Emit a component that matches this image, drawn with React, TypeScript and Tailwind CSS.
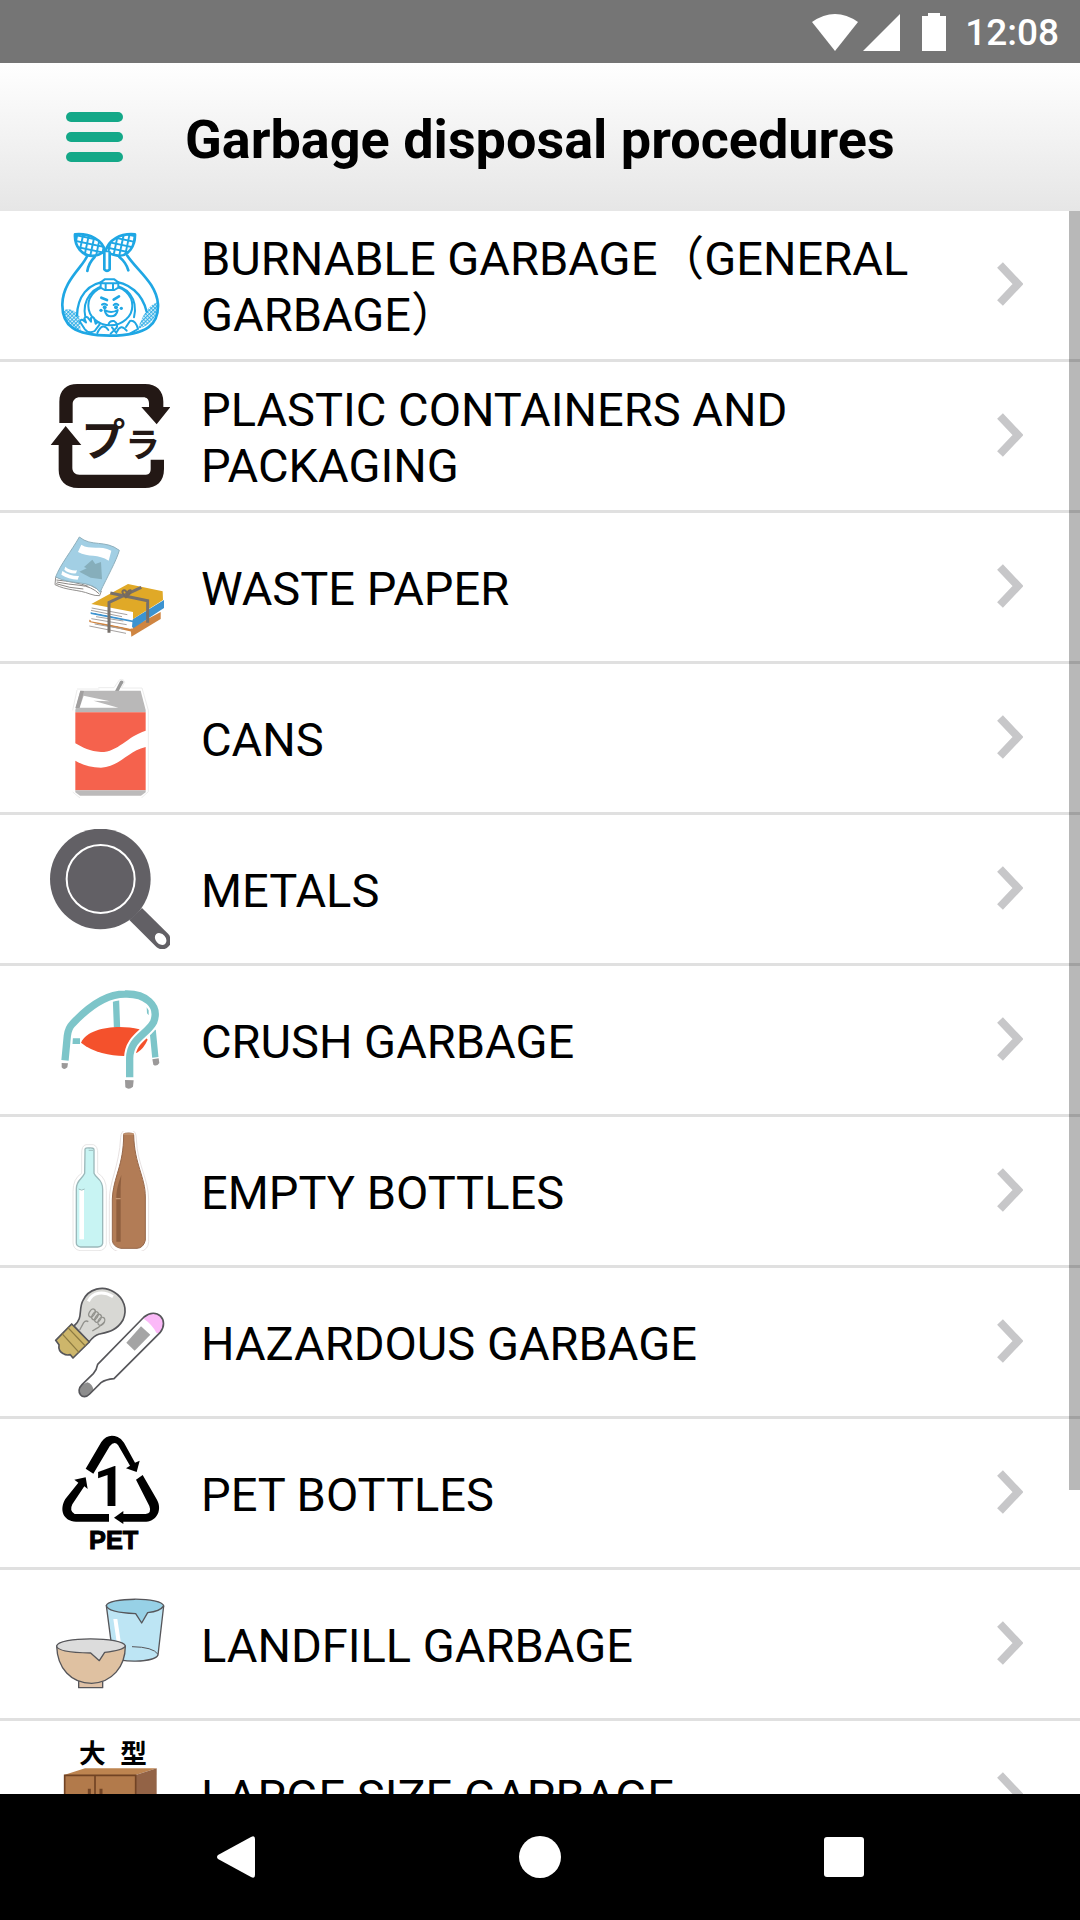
import type { ReactNode } from "react";

const BLUE = "#1fa7e4";
const OUTLINE = "#56565a";

function Icon({ viewBox, children }: { viewBox: string; children: ReactNode }) {
  return (
    <svg viewBox={viewBox} className="h-[120px] w-[120px] shrink-0" fill="none" aria-hidden="true">
      {children}
    </svg>
  );
}

function BurnableIcon() {
  return (
    <Icon viewBox="30 30 360 360">
      <defs>
        <pattern id="weave" width="17" height="17" patternUnits="userSpaceOnUse" patternTransform="rotate(12)">
          <path d="M0 3H17M3 0V17" stroke={BLUE} strokeWidth="6" />
        </pattern>
        <pattern id="mesh" width="8" height="8" patternUnits="userSpaceOnUse" patternTransform="rotate(45)">
          <path d="M0 2H8M2 0V8" stroke={BLUE} strokeWidth="3" />
        </pattern>
      </defs>
      <g stroke={BLUE} strokeWidth="8" strokeLinecap="round" strokeLinejoin="round">
        <path d="M142 122C130 155 68 198 67 268C66 330 100 361 210 362C325 362 356 325 354 268C350 205 290 165 262 122" />
        <path d="M70 286C85 278 105 284 118 304L122 346C92 340 74 318 70 286Z" fill="url(#mesh)" stroke="none" />
        <path d="M352 262C332 268 320 285 308 306L292 342C335 332 354 305 352 262Z" fill="url(#mesh)" stroke="none" />
        <path d="M195 108C188 75 150 54 105 58C103 92 125 127 165 122C180 118 190 112 195 108Z" fill="url(#weave)" />
        <path d="M197 108C205 75 240 54 285 58C286 92 265 126 233 122C216 119 205 114 197 108Z" fill="url(#weave)" />
        <path d="M164 126Q146 144 142 168M238 126Q258 142 265 166" />
        <path d="M193 112V163Q201 172 209 163V112" fill="#fff" />
        <path d="M111 302C112 250 140 200 208 199C270 199 308 240 320 290" strokeWidth="7" />
        <path d="M136 306C125 255 158 211 210 211C262 211 295 252 282 307" strokeWidth="6" />
        <ellipse cx="211" cy="272" rx="66" ry="59" strokeWidth="6" />
        <path d="M182 202L194 193H223L235 202V218L223 225H194L182 218ZM197 206V223M219 206V223M184 205H233" fill="#fff" strokeWidth="6" />
        <path d="M184 248L201 255M221 254L237 244" />
        <path d="M186 269Q194 263 201 270M221 270Q229 263 235 270" strokeWidth="6" />
        <path d="M194 285Q213 297 233 285Q230 304 213 304Q197 304 194 285Z" fill="#fff" strokeWidth="6" />
        <path d="M120 320Q123 310 132 318L138 322L133 310Q140 301 146 311L153 320L153 309Q161 303 164 315L167 326Q178 316 179 328L164 348Q146 358 134 342Z" fill="#fff" strokeWidth="6" />
        <path d="M172 354Q188 320 205 345M205 330Q208 316 222 318Q235 326 230 338L212 356M231 350Q242 325 260 347M258 336L270 318Q286 314 294 342L271 355M216 337L229 354" strokeWidth="6" />
      </g>
      <g fill={BLUE}>
        <circle cx="194" cy="277" r="6" />
        <circle cx="228" cy="277" r="6" />
        <circle cx="183" cy="286" r="5" />
        <circle cx="244" cy="280" r="5" />
      </g>
    </Icon>
  );
}

function PlasticIcon() {
  return (
    <Icon viewBox="30 33 360 360">
      <g fill="#231815">
        <path d="M58 174V110C58 75 80 57 112 57H315C350 57 370 78 370 110V126H391L350 178L304 126H327V115C327 103 320 97 310 97H120C107 97 98 105 98 118V174Z" />
        <path d="M77 183L124 240H97V308C97 320 105 329 118 329H318C328 329 332 322 332 312V284H372V312C372 350 350 369 315 369H115C75 369 56 345 56 315V240H32Z" />
        <text x="124" y="274" fontSize="132" className="font-['Noto_Sans_CJK_JP',sans-serif] font-bold">プ</text>
        <text x="256" y="277" fontSize="104" className="font-['Noto_Sans_CJK_JP',sans-serif] font-bold">ラ</text>
      </g>
    </Icon>
  );
}

function PaperIcon() {
  return (
    <Icon viewBox="30 21 360 360">
      <g strokeLinejoin="round">
        <path d="M47 172L45 194C80 212 115 208 150 222Q166 228 179 227L184 213Q120 175 47 172Z" fill="#fff" stroke="#918f8d" strokeWidth="3" />
        <path d="M50 186Q85 193 120 196T178 222M49 180Q105 185 145 199M48 191Q90 205 130 207" stroke="#8b8784" strokeWidth="3" />
        <path d="M118 51C155 82 195 58 238 91C228 125 202 170 180 217C155 178 95 197 47 171C60 135 95 92 118 51Z" fill="#a2cfe4" stroke="#8eafbc" strokeWidth="3" />
        <path d="M124 74C150 91 180 74 214 92L206 122C175 101 145 113 114 96Z" fill="#fff" />
        <path d="M157 119L166 132L183 126L186 178L152 173L118 155L140 145L132 141Z" fill="#86aebb" />
        <path d="M76 140Q91 153 111 151L108 160Q88 162 73 149ZM67 153Q90 169 117 168L113 179Q85 177 64 164Z" fill="#fff" />
      </g>
      <path d="M150 302L272 326V348L148 322Z" fill="#fff" />
      <path d="M272 324L362 276V297L274 350Z" fill="#cf8541" />
      <path d="M148 299L276 328V335L148 306Z" fill="#cf8541" />
      <path d="M152 279L278 300V326L152 304Z" fill="#fff" />
      <path d="M278 298L372 240V264L281 324L276 320Z" fill="#3c93d0" />
      <path d="M152 276L282 302L279 307L152 282Z" fill="#3c93d0" />
      <path d="M155 253L278 276V299L154 277Z" fill="#fff" />
      <path d="M154 252L264 192L368 214L369 240L279 297V276Z" fill="#e0a927" />
      <path d="M155 264L262 284M153 271L246 290M168 290L250 303M154 296L260 314M164 312L250 327M148 318L258 340" stroke="#a5a1a0" strokeWidth="3" />
      <path d="M207 338V247L304 202M211 219L323 242V308" stroke="#77706b" strokeWidth="9" />
      <path d="M258 232Q240 214 252 211Q261 210 261 229Q262 209 272 211Q276 218 258 232Z" stroke="#776b5c" strokeWidth="6" />
    </Icon>
  );
}

function CanIcon() {
  return (
    <Icon viewBox="30 24 360 360">
      <path d="M111 57H178M175 53H222L239 29Q252 26 254 37L244 54H306L325 121V365L304 384M98 366L120 384M111 60L98 121" stroke="#ececec" strokeWidth="3" />
      <path d="M224 65L240 34Q244 29 250 34Q252 38 247 43L235 65Z" fill="#9a9a9a" />
      <path d="M121 62H302L317 120V127H106V120Z" fill="#b9b8b8" />
      <path d="M121 62L132 63L119 114H106Z" fill="#a19f9f" />
      <path d="M131 77L210 94L160 92L235 113H119Z" fill="#fff" />
      <path d="M106 127H317V182C260 200 235 246 183 246C150 245 128 232 106 220Z" fill="#f5624d" />
      <path d="M106 272C130 287 155 293 183 293C240 290 260 245 317 231V361H106Z" fill="#f5624d" />
      <path d="M106 361H317V367L303 377H120L106 367Z" fill="#bcbaba" />
    </Icon>
  );
}

function PanIcon() {
  return (
    <Icon viewBox="30 477 360 360">
      <circle cx="181" cy="627" r="151" fill="#626065" />
      <path d="M268 750L306 714L385 792Q399 810 387 828Q370 846 350 832Z" fill="#626065" />
      <circle cx="182" cy="627" r="102" stroke="#fff" strokeWidth="6" />
      <ellipse cx="362" cy="807" rx="15" ry="20" transform="rotate(-42 362 807)" fill="#fff" />
    </Icon>
  );
}

function ChairIcon() {
  return (
    <Icon viewBox="30 30 360 360">
      <path d="M228 91L231 172M338 180L346 262" stroke="#7dc5c9" strokeWidth="19" />
      <path d="M97 205H120V222H97ZM320 112L326 120V136L321 130Z" fill="#7dc5c9" />
      <path d="M123 218C145 172 235 163 298 178L323 209Q311 236 291 248L252 258C210 256 160 249 123 218Z" fill="#f4512c" />
      <path d="M75 272L82 197Q87 174 97 162C150 105 200 72 255 72C315 70 360 105 341 156C320 195 270 205 269 265V323" stroke="#fff" strokeWidth="34" />
      <path d="M75 271L82 197Q85 174 97 162C150 105 200 72 255 72C315 70 360 105 341 156C320 195 270 205 269 265V322" stroke="#7dc5c9" strokeWidth="22" />
      <path d="M65 279L84 280L82 292Q72 302 65 292ZM337 268L356 265L358 279Q350 291 340 284ZM255 330L281 331L279 350Q267 361 256 352Z" fill="#9b9999" />
    </Icon>
  );
}

function BottlesIcon() {
  return (
    <Icon viewBox="30 483 360 360">
      <path d="M125 552Q124 527 138 524H160Q174 528 173 552V609Q200 625 199 662V823Q195 841 177 842H120Q100 838 99 819V665Q99 625 125 610Z" stroke="#e8e6e6" strokeWidth="3" />
      <path d="M242 502Q243 483 256 481H276Q289 484 289 507C292 587 326 625 326 690V815Q325 839 301 845H235Q211 839 208 815V692C207 637 238 588 242 502Z" stroke="#e8e2e2" strokeWidth="3" />
      <path d="M135 545V537Q137 533 148 534Q162 533 162 539V610C169 627 188 627 188 658V820Q186 830 173 831H122Q109 829 109 819V656C109 630 127 627 134 610Z" fill="#c8f4f3" stroke="#9bb8ba" strokeWidth="4" />
      <path d="M118 660H132V808H118Z" fill="#fff" />
      <path d="M116 657Q125 664 134 657M146 541H159" stroke="#9fbfbf" strokeWidth="3" />
      <path d="M251 493Q252 489 266 489Q281 489 281 494C283 584 316 620 316 681V811Q310 834 291 835H242Q219 830 217 811V687C220 620 251 588 251 493Z" fill="#b27c56" stroke="#96674a" strokeWidth="3" />
      <path d="M244 615C234 642 229 660 229 685V815H242V690Q241 648 244 615Z" fill="#8f5f3f" />
      <path d="M250 492H282M227 686H242" stroke="#c59774" strokeWidth="4" />
    </Icon>
  );
}

function HazardIcon() {
  return (
    <Icon viewBox="30 36 360 360">
      <g stroke={OUTLINE} strokeWidth="5" strokeLinejoin="round">
        <path d="M102 168C130 145 115 120 128 93C145 55 190 45 222 66C253 85 263 119 249 150C230 182 205 186 178 192Q163 196 147 216Z" fill="#d8d8d4" />
        <path d="M95 162L148 216L99 264L91 254Q78 257 70 251Q54 244 57 224L47 211Z" fill="#cdb66b" />
        <path d="M83 172L136 228M66 191L117 247" stroke="#8d7b42" strokeWidth="4" />
      </g>
      <path d="M145 94C158 66 190 62 219 80" stroke="#fff" strokeWidth="9" />
      <g stroke="#92928d" strokeWidth="4">
        <path d="M119 180L131 158Q137 150 145 155M193 157L174 173Q169 176 157 183" />
        <ellipse cx="156" cy="129" rx="8" ry="13" transform="rotate(32 156 129)" />
        <ellipse cx="165" cy="137" rx="8" ry="13" transform="rotate(32 165 137)" />
        <ellipse cx="174" cy="145" rx="8" ry="13" transform="rotate(32 174 145)" />
        <ellipse cx="184" cy="154" rx="9" ry="13" transform="rotate(32 184 154)" />
      </g>
      <path d="M173 283L312 141C350 109 390 151 360 188L222 326Q197 328 183 338L149 372C128 394 104 365 126 344L160 311Q170 300 173 283Z" fill="#fff" />
      <path d="M312 141C350 109 390 151 360 188L350 190Q337 164 309 145Z" fill="#fbb9f8" />
      <path d="M142 337Q157 342 161 360L149 372C128 394 104 365 126 344Z" fill="#8d8d8d" />
      <path d="M173 283L312 141C350 109 390 151 360 188L222 326Q197 328 183 338L149 372C128 394 104 365 126 344L160 311Q170 300 173 283Z" stroke={OUTLINE} strokeWidth="5" />
      <path d="M303 169L331 194L284 242L259 218Z" fill="#a4a4a4" />
    </Icon>
  );
}

function PetIcon() {
  return (
    <Icon viewBox="30 489 360 360">
      <g fill="#000">
        <path d="M137 596L184 516Q204 488 233 501Q245 506 252 518L285 578L299 572L290 606L258 595L270 587L234 525Q223 512 209 529L160 611Z" />
        <path d="M308 615L350 688C368 718 351 754 319 755H250V762L222 743L250 723V732H317Q336 729 328 708L288 629Z" />
        <path d="M207 732V755H108C69 753 57 720 76 687L115 638L103 629L137 622L143 657L133 649L97 703Q87 723 104 732Z" />
        <text x="209" y="708" fontSize="168" textAnchor="middle" className="font-[Roboto,sans-serif] font-bold">1</text>
        <text x="221" y="838" fontSize="76" textAnchor="middle" stroke="#000" strokeWidth="3" className="font-['Liberation_Sans',sans-serif] font-bold">PET</text>
      </g>
    </Icon>
  );
}

function LandfillIcon() {
  return (
    <Icon viewBox="30 12 360 360">
      <g stroke={OUTLINE} strokeWidth="4" strokeLinejoin="round">
        <path d="M199 77L219 229C230 249 344 249 354 225L371 78Z" fill="#bde5f4" />
        <path d="M199 77C202 52 368 50 371 78Q360 94 323 98L305 129L287 101C235 99 202 92 199 77Z" fill="#97d1e6" />
        <path d="M276 200Q340 201 354 223" strokeWidth="3" />
        <path d="M220 117H232L242 184L232 200Z" fill="#fff" stroke="none" />
        <path d="M116 302H188V323H116Z" fill="#dfc1a6" />
        <path d="M50 198C52 265 93 310 155 310C216 308 256 260 256 198Z" fill="#dfc1a1" />
        <path d="M50 198C53 169 251 170 256 198Q250 211 194 217L178 242L152 219C92 218 51 211 50 198Z" fill="#dcdcdc" />
      </g>
    </Icon>
  );
}

function LargeIcon() {
  return (
    <Icon viewBox="30 465 360 360">
      <g fill="#000">
        <text x="117" y="549" fontSize="80" className="font-['Noto_Sans_CJK_JP',sans-serif] font-bold">大</text>
        <text x="241" y="549" fontSize="80" className="font-['Noto_Sans_CJK_JP',sans-serif] font-bold">型</text>
      </g>
      <path d="M72 585L135 565H350L287 585Z" fill="#bd8450" />
      <path d="M287 585L350 565V790L287 820Z" fill="#936346" />
      <path d="M74 586H287V820H74Z" fill="#b27a4b" stroke="#714324" strokeWidth="5" />
      <path d="M165 587V820" stroke="#714324" strokeWidth="5" />
      <path d="M148 626V670M183 626V670" stroke="#714324" strokeWidth="9" />
    </Icon>
  );
}

const categories = [
  { label: "BURNABLE GARBAGE（GENERAL GARBAGE）", slug: "burnable", icon: BurnableIcon },
  { label: "PLASTIC CONTAINERS AND PACKAGING", slug: "plastic", icon: PlasticIcon },
  { label: "WASTE PAPER", slug: "paper", icon: PaperIcon },
  { label: "CANS", slug: "cans", icon: CanIcon },
  { label: "METALS", slug: "metals", icon: PanIcon },
  { label: "CRUSH GARBAGE", slug: "crush", icon: ChairIcon },
  { label: "EMPTY BOTTLES", slug: "bottles", icon: BottlesIcon },
  { label: "HAZARDOUS GARBAGE", slug: "hazardous", icon: HazardIcon },
  { label: "PET BOTTLES", slug: "pet", icon: PetIcon },
  { label: "LANDFILL GARBAGE", slug: "landfill", icon: LandfillIcon },
  { label: "LARGE SIZE GARBAGE", slug: "large", icon: LargeIcon },
];

function StatusBar() {
  return (
    <div className="flex h-[63px] shrink-0 items-center justify-end bg-[#757575] pr-[21px] text-white">
      <svg viewBox="0 0 134 38" className="h-[38px] w-[134px]" fill="currentColor" aria-hidden="true">
        <path d="M0 9Q23 -7 46 9L23 38Z" />
        <path d="M88 1V38H51Z" />
        <path d="M116 0H128V3H134V38H110V3H116Z" />
      </svg>
      <span className="ml-[19px] pt-0.5 text-[37px] leading-[44px] font-medium">12:08</span>
    </div>
  );
}

function Header() {
  return (
    <header className="flex h-[148px] shrink-0 items-center bg-linear-to-b from-white to-[#e6e6e6] pl-[66px]">
      <button type="button" aria-label="Menu" className="flex w-[57px] flex-col gap-[10px]">
        <span className="h-[10px] rounded-full bg-[#14a888]" />
        <span className="h-[10px] rounded-full bg-[#14a888]" />
        <span className="h-[10px] rounded-full bg-[#14a888]" />
      </button>
      <h1 className="ml-[62px] pt-1.5 text-[54px] leading-[64px] font-bold">Garbage disposal procedures</h1>
    </header>
  );
}

function NavBar() {
  return (
    <nav className="grid h-[126px] shrink-0 grid-cols-3 bg-black px-[84px] text-white">
      <button type="button" aria-label="Back" className="flex items-center justify-center">
        <svg viewBox="0 0 38 42" className="h-[42px] w-[38px]" fill="currentColor">
          <path d="M1 19L34 1Q38 -1 38 3V39Q38 43 34 41L1 23Q-1 21 1 19Z" />
        </svg>
      </button>
      <button type="button" aria-label="Home" className="flex items-center justify-center">
        <span className="h-[42px] w-[42px] rounded-full bg-white" />
      </button>
      <button type="button" aria-label="Recent apps" className="flex items-center justify-center">
        <span className="h-10 w-10 rounded-[3px] bg-white" />
      </button>
    </nav>
  );
}

export default function App() {
  return (
    <div className="flex h-screen flex-col bg-white font-[Roboto,'Noto_Sans_CJK_JP',sans-serif] text-black">
      <StatusBar />
      <Header />
      <main className="relative min-h-0 flex-1">
        <ul className="h-full overflow-y-auto [scrollbar-width:none]">
          {categories.map(({ label, slug, icon: CategoryIcon }) => (
            <li key={slug} className="border-b-3 border-[#e0e0e0]">
              <a href={`#${slug}`} className="flex min-h-[148px] items-center pr-[57px] pl-[50px]">
                <CategoryIcon />
                <span className="ml-[31px] flex-1 pt-1 text-[47px] leading-[56px]">{label}</span>
                <svg viewBox="0 0 26 46" className="mb-0.5 ml-5 h-[46px] w-[26px] shrink-0" fill="none" aria-hidden="true">
                  <path d="M3 4L21 23L3 42" stroke="#c7c7c9" strokeWidth="8" />
                </svg>
              </a>
            </li>
          ))}
        </ul>
        {/* Scroll position indicator */}
        <div className="pointer-events-none absolute top-0 right-0 h-[80.8%] w-[11px] bg-black/28" />
      </main>
      <NavBar />
    </div>
  );
}
